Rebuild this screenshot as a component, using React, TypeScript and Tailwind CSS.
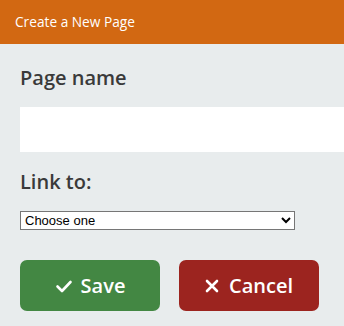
import React, { useState } from 'react';

const CheckIcon: React.FC = () => (
  <svg width="18" height="18" viewBox="0 0 18 18" fill="none" stroke="currentColor" strokeWidth="2.6" strokeLinecap="round" strokeLinejoin="round">
    <path d="M2.5 9.5l4.5 4.5 8.5-9" />
  </svg>
);

const XIcon: React.FC = () => (
  <svg width="14" height="14" viewBox="0 0 14 14" fill="none" stroke="currentColor" strokeWidth="2.6" strokeLinecap="round">
    <path d="M2 2l10 10M12 2L2 12" />
  </svg>
);

const App: React.FC = () => {
  const [name, setName] = useState('');
  const [link, setLink] = useState('');

  return (
    <div className="min-h-screen w-[344px] overflow-hidden bg-[#e8eced] font-['Open_Sans','Lato',sans-serif]">
      <header className="h-[44px] bg-[#d26812] px-[15px] flex items-center">
        <h1 className="text-[13.7px] text-white">Create a New Page</h1>
      </header>
      <main className="px-[20px] pt-[22px]">
        <label className="block text-[20px] font-semibold text-[#3a3a3a] leading-[24px]">Page name</label>
        <input
          value={name}
          onChange={e => setName(e.target.value)}
          className="mt-[17px] block h-[45px] w-[400px] bg-white outline-none px-3"
        />
        <label className="mt-[18px] block text-[20px] font-semibold text-[#3a3a3a] leading-[24px]">Link to:</label>
        <select
          value={link}
          onChange={e => setLink(e.target.value)}
          className="mt-[17px] block h-[19px] w-[275px] border border-[#767676] bg-white text-[13px] text-black font-['Liberation_Sans',Arial,sans-serif] pl-0 appearance-auto"
        >
          <option value="">Choose one</option>
          <option value="home">Home</option>
          <option value="about">About</option>
        </select>
        <div className="mt-[30px] flex gap-[19px]">
          <button className="flex h-[51px] w-[140px] items-center justify-center gap-[8px] rounded-[7px] bg-[#438743] text-[20px] font-semibold text-white">
            <CheckIcon />
            Save
          </button>
          <button className="flex h-[51px] w-[140px] items-center justify-center gap-[10px] rounded-[7px] bg-[#9c241f] text-[20px] font-semibold text-white">
            <XIcon />
            Cancel
          </button>
        </div>
      </main>
    </div>
  );
};

export default App;
